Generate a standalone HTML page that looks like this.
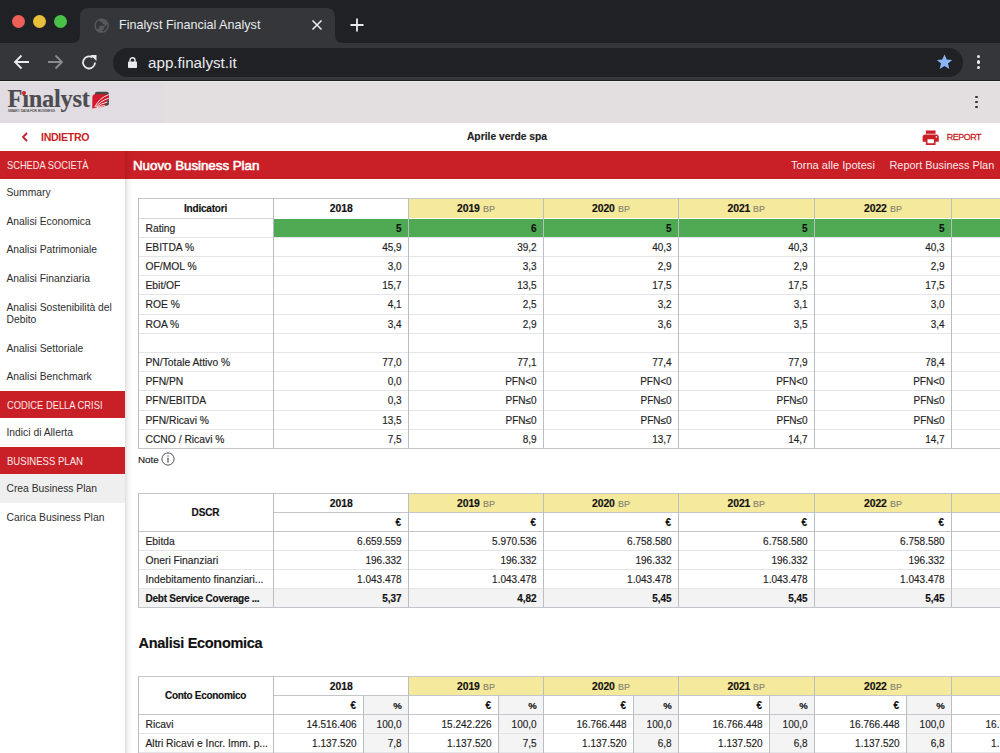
<!DOCTYPE html><html><head><meta charset='utf-8'><style>
html,body{margin:0;padding:0;width:1000px;height:753px;overflow:hidden;background:#fff;font-family:"Liberation Sans",sans-serif;}
.t{position:absolute;white-space:nowrap;-webkit-text-stroke:0.15px currentColor;}
.r{position:absolute;}
svg{position:absolute;}
</style></head><body>
<div class='r' style='left:0px;top:0px;width:1000px;height:43px;background:#202124;'></div>
<div class='r' style='left:0px;top:43px;width:1000px;height:38px;background:#35363a;'></div>
<div class='r' style='left:80px;top:8px;width:255px;height:36px;background:#35363a;border-radius:8px 8px 0 0'></div>
<svg style='left:72px;top:35px' width='8' height='8'><path d='M0 8 Q8 8 8 0 L8 8 Z' fill='#35363a'/></svg>
<svg style='left:335px;top:35px' width='8' height='8'><path d='M8 8 Q0 8 0 0 L0 8 Z' fill='#35363a'/></svg>
<div class='r' style='left:12.0px;top:15.0px;width:13px;height:13px;border-radius:50%;background:#ee5f58'></div>
<div class='r' style='left:33.0px;top:15.0px;width:13px;height:13px;border-radius:50%;background:#e8be3a'></div>
<div class='r' style='left:54.0px;top:15.0px;width:13px;height:13px;border-radius:50%;background:#4bc14a'></div>
<svg style='left:93.2px;top:16.9px' width='17.3' height='17.3' viewBox='0 0 24 24'><path transform='translate(24 0) scale(-1 1)' fill='#55585c' fill-rule='evenodd' d='M12 2C6.48 2 2 6.48 2 12s4.48 10 10 10 10-4.48 10-10S17.52 2 12 2zm-1 17.93c-3.95-.49-7-3.85-7-7.93 0-.62.08-1.21.21-1.79L9 15v1c0 1.1.9 2 2 2v1.93zm6.9-2.54c-.26-.81-1-1.39-1.9-1.39h-1v-3c0-.55-.45-1-1-1H8v-2h2c.55 0 1-.45 1-1V7h2c1.1 0 2-.9 2-2v-.41c2.93 1.19 5 4.06 5 7.41 0 2.08-.8 3.97-2.1 5.39z'/></svg>
<div class='t' style='top:18.47px;font-size:12.6px;font-weight:normal;color:#e8eaed;line-height:15.12px;left:119px;-webkit-text-stroke:0;'>Finalyst Financial Analyst</div>
<svg style='left:311px;top:19px' width='12' height='12' viewBox='0 0 12 12'><path d='M1.5 1.5 L10.5 10.5 M10.5 1.5 L1.5 10.5' stroke='#e8eaed' stroke-width='1.6'/></svg>
<svg style='left:350px;top:18px' width='14' height='14' viewBox='0 0 14 14'><path d='M7 0.5 V13.5 M0.5 7 H13.5' stroke='#e8eaed' stroke-width='1.8'/></svg>
<svg style='left:13px;top:54px' width='17' height='16' viewBox='0 0 17 16'><path d='M16 8 H2 M8.5 1.5 L2 8 L8.5 14.5' stroke='#e8eaed' stroke-width='1.8' fill='none'/></svg>
<svg style='left:47px;top:54px' width='17' height='16' viewBox='0 0 17 16'><path d='M1 8 H15 M8.5 1.5 L15 8 L8.5 14.5' stroke='#8a8b8e' stroke-width='1.8' fill='none'/></svg>
<svg style='left:81px;top:54px' width='17' height='17' viewBox='0 0 17 17'><path d='M14 8.5 A6 6 0 1 1 11.5 3.6' stroke='#e8eaed' stroke-width='1.8' fill='none'/><path d='M9.5 1 L15.5 1 L15.5 7 Z' fill='#e8eaed'/></svg>
<div class='r' style='left:112.5px;top:48px;width:850.5px;height:29px;background:#202124;border-radius:14.5px'></div>
<svg style='left:127.5px;top:56.5px' width='9' height='11' viewBox='0 0 9 11'><path d='M2 5 V3.3 A2.5 2.5 0 0 1 7 3.3 V5' stroke='#e8eaed' stroke-width='1.4' fill='none'/><rect x='0' y='4.6' width='9' height='6.4' rx='0.8' fill='#e8eaed'/></svg>
<div class='t' style='top:53.51px;font-size:15.2px;font-weight:normal;color:#e8eaed;line-height:18.24px;left:148px;-webkit-text-stroke:0;'>app.finalyst.it</div>
<svg style='left:936px;top:54px' width='17' height='16' viewBox='0 0 24 23'><path d='M12 0.8 L15.2 8 L23 8.6 L17 13.7 L18.9 21.5 L12 17.3 L5.1 21.5 L7 13.7 L1 8.6 L8.8 8 Z' fill='#8ab4f8'/></svg>
<div class='r' style='left:976.5px;top:54.900000000000006px;width:3.6px;height:3.6px;border-radius:50%;background:#e8eaed'></div>
<div class='r' style='left:976.5px;top:60.400000000000006px;width:3.6px;height:3.6px;border-radius:50%;background:#e8eaed'></div>
<div class='r' style='left:976.5px;top:65.8px;width:3.6px;height:3.6px;border-radius:50%;background:#e8eaed'></div>
<div class='r' style='left:0px;top:80px;width:1000px;height:1px;background:#1c1c1e;'></div>
<div class='r' style='left:0px;top:81px;width:1000px;height:42px;background:#e3dfe0;'></div>
<div class='r' style='left:0px;top:82px;width:164px;height:41px;background:#e1dce2;'></div>
<div class='r' style='left:0px;top:81px;width:1000px;height:1px;background:#ebe8ea;'></div>
<div class='t' style='left:7.5px;top:84.3px;font-family:"Liberation Serif",serif;font-weight:bold;font-size:24.5px;line-height:30px;color:#4d4d4f;letter-spacing:-0.3px'>F&#305;nalyst</div>
<div class='r' style='left:21.8px;top:90.8px;width:3.8px;height:3.8px;border-radius:50%;background:#d0202a'></div>
<div class='t' style='top:109.78px;font-size:3.3px;font-weight:normal;color:#555;line-height:3.96px;letter-spacing:0.05px;left:8px;'>SMART DATA FOR BUSINESS</div>
<svg style='left:85px;top:85px' width='30' height='30' viewBox='0 0 30 30'><rect x='9.8' y='6.8' width='14.1' height='13.9' rx='2.2' fill='#48484a'/><path d='M7.2 23.6 L7.4 12 Q7.6 9.2 10.4 9.2 L20.5 9.2 Q23.9 9.4 23.9 11 L23.9 13 Q21 16 20 20.5 L19 21.5 Z' fill='#d3192b'/><path d='M9.8 22 Q14 13 23.9 9.6 M10.6 22.2 Q15 16 23.9 13.2 M11.4 22.4 Q15.5 18.5 22.5 17 M12.2 22.6 Q15.5 20.8 19.8 20.6' stroke='#f4eeee' stroke-width='0.95' fill='none'/></svg>
<div class='r' style='left:975.4px;top:95.69999999999999px;width:2.8px;height:2.8px;border-radius:50%;background:#333'></div>
<div class='r' style='left:975.4px;top:100.69999999999999px;width:2.8px;height:2.8px;border-radius:50%;background:#333'></div>
<div class='r' style='left:975.4px;top:105.69999999999999px;width:2.8px;height:2.8px;border-radius:50%;background:#333'></div>
<div class='r' style='left:0px;top:123px;width:1000px;height:28px;background:#fff;'></div>
<svg style='left:21px;top:132px' width='8' height='10' viewBox='0 0 8 10'><path d='M6 1 L2 5 L6 9' stroke='#c91f26' stroke-width='1.8' fill='none'/></svg>
<div class='t' style='top:131.17px;font-size:10.6px;font-weight:bold;color:#c91f26;line-height:12.72px;letter-spacing:-0.3px;left:41px;-webkit-text-stroke:0;'>INDIETRO</div>
<div class='t' style='top:130.65px;font-size:10.3px;font-weight:bold;color:#222;line-height:12.36px;left:207px;width:600px;text-align:center;'>Aprile verde spa</div>
<svg style='left:921.2px;top:127.6px' width='19.4' height='19.4' viewBox='0 0 24 24'><path fill='#c91f26' d='M19 8H5c-1.66 0-3 1.34-3 3v6h4v4h12v-4h4v-6c0-1.66-1.34-3-3-3zm-3 11H8v-5h8v5zm3-7c-.55 0-1-.45-1-1s.45-1 1-1 1 .45 1 1-.45 1-1 1zm-1-9H6v4h12V3z'/></svg>
<div class='t' style='top:132.28px;font-size:8.9px;font-weight:normal;color:#c91f26;line-height:10.68px;letter-spacing:-0.45px;left:946.8px;-webkit-text-stroke:0.3px #c91f26;'>REPORT</div>
<div class='r' style='left:0px;top:151px;width:1000px;height:28px;background:#c91f26;'></div>
<div class='t' style='top:159.38px;font-size:10.8px;font-weight:normal;color:#fbe9ea;line-height:12.96px;transform:scaleX(0.86);transform-origin:0 0;left:6.5px;-webkit-text-stroke:0;'>SCHEDA SOCIETÀ</div>
<div class='t' style='top:157.72px;font-size:13.4px;font-weight:normal;color:#fff;line-height:16.08px;letter-spacing:-0.05px;left:133px;-webkit-text-stroke:0.55px #fff;'>Nuovo Business Plan</div>
<div class='t' style='top:159.19px;font-size:11.1px;font-weight:normal;color:#fbe9ea;line-height:13.32px;left:791px;-webkit-text-stroke:0;'>Torna alle Ipotesi</div>
<div class='t' style='top:159.38px;font-size:10.9px;font-weight:normal;color:#fbe9ea;line-height:13.08px;left:889.5px;-webkit-text-stroke:0;'>Report Business Plan</div>
<div class='r' style='left:0px;top:179px;width:125px;height:574px;background:#fff;'></div>
<div class='t' style='top:187.25px;font-size:10.3px;font-weight:normal;color:#2e2e2e;line-height:12.36px;left:6.5px;-webkit-text-stroke:0;'>Summary</div>
<div class='t' style='top:215.95px;font-size:10.3px;font-weight:normal;color:#2e2e2e;line-height:12.36px;left:6.5px;-webkit-text-stroke:0;'>Analisi Economica</div>
<div class='t' style='top:244.45px;font-size:10.3px;font-weight:normal;color:#2e2e2e;line-height:12.36px;left:6.5px;-webkit-text-stroke:0;'>Analisi Patrimoniale</div>
<div class='t' style='top:272.95px;font-size:10.3px;font-weight:normal;color:#2e2e2e;line-height:12.36px;left:6.5px;-webkit-text-stroke:0;'>Analisi Finanziaria</div>
<div class='t' style='top:301.95px;font-size:10.3px;font-weight:normal;color:#2e2e2e;line-height:12.36px;left:6.5px;-webkit-text-stroke:0;'>Analisi Sostenibilità del</div>
<div class='t' style='top:314.45px;font-size:10.3px;font-weight:normal;color:#2e2e2e;line-height:12.36px;left:6.5px;-webkit-text-stroke:0;'>Debito</div>
<div class='t' style='top:342.95px;font-size:10.3px;font-weight:normal;color:#2e2e2e;line-height:12.36px;left:6.5px;-webkit-text-stroke:0;'>Analisi Settoriale</div>
<div class='t' style='top:371.45px;font-size:10.3px;font-weight:normal;color:#2e2e2e;line-height:12.36px;left:6.5px;-webkit-text-stroke:0;'>Analisi Benchmark</div>
<div class='r' style='left:0px;top:391px;width:125px;height:27px;background:#c91f26;'></div>
<div class='t' style='top:398.88px;font-size:10.8px;font-weight:normal;color:#fbe9ea;line-height:12.96px;transform:scaleX(0.865);transform-origin:0 0;left:6.5px;-webkit-text-stroke:0;'>CODICE DELLA CRISI</div>
<div class='t' style='top:427.45px;font-size:10.3px;font-weight:normal;color:#2e2e2e;line-height:12.36px;left:6.5px;-webkit-text-stroke:0;'>Indici di Allerta</div>
<div class='r' style='left:0px;top:447px;width:125px;height:27px;background:#c91f26;'></div>
<div class='t' style='top:454.88px;font-size:10.8px;font-weight:normal;color:#fbe9ea;line-height:12.96px;transform:scaleX(0.885);transform-origin:0 0;left:6.5px;-webkit-text-stroke:0;'>BUSINESS PLAN</div>
<div class='r' style='left:0px;top:474px;width:125px;height:29px;background:#efefef;'></div>
<div class='t' style='top:483.45px;font-size:10.3px;font-weight:normal;color:#2e2e2e;line-height:12.36px;left:6.5px;-webkit-text-stroke:0;'>Crea Business Plan</div>
<div class='t' style='top:511.95px;font-size:10.3px;font-weight:normal;color:#2e2e2e;line-height:12.36px;left:6.5px;-webkit-text-stroke:0;'>Carica Business Plan</div>
<div class='r' style='left:408px;top:198px;width:135px;height:20px;background:#f5e99b;'></div>
<div class='r' style='left:543px;top:198px;width:135px;height:20px;background:#f5e99b;'></div>
<div class='r' style='left:678px;top:198px;width:136px;height:20px;background:#f5e99b;'></div>
<div class='r' style='left:814px;top:198px;width:137px;height:20px;background:#f5e99b;'></div>
<div class='r' style='left:951px;top:198px;width:136px;height:20px;background:#f5e99b;'></div>
<div class='r' style='left:273px;top:219px;width:727px;height:18px;background:#4ea952;'></div>
<div class='r' style='left:138px;top:237px;width:862px;height:1px;background:#e3e5e8'></div>
<div class='r' style='left:138px;top:256px;width:862px;height:1px;background:#e3e5e8'></div>
<div class='r' style='left:138px;top:275px;width:862px;height:1px;background:#e3e5e8'></div>
<div class='r' style='left:138px;top:294px;width:862px;height:1px;background:#e3e5e8'></div>
<div class='r' style='left:138px;top:314px;width:862px;height:1px;background:#e3e5e8'></div>
<div class='r' style='left:138px;top:333px;width:862px;height:1px;background:#e3e5e8'></div>
<div class='r' style='left:138px;top:352px;width:862px;height:1px;background:#e3e5e8'></div>
<div class='r' style='left:138px;top:371px;width:862px;height:1px;background:#e3e5e8'></div>
<div class='r' style='left:138px;top:390px;width:862px;height:1px;background:#e3e5e8'></div>
<div class='r' style='left:138px;top:410px;width:862px;height:1px;background:#e3e5e8'></div>
<div class='r' style='left:138px;top:429px;width:862px;height:1px;background:#e3e5e8'></div>
<div class='r' style='left:138px;top:218px;width:135px;height:1px;background:#d3d6da'></div>
<div class='r' style='left:138px;top:198px;width:862px;height:1.3px;background:#c3c7cc'></div>
<div class='r' style='left:138px;top:448px;width:862px;height:1.3px;background:#c3c7cc'></div>
<div class='r' style='left:138px;top:198px;width:1px;height:250px;background:#b9bec6'></div>
<div class='r' style='left:273px;top:198px;width:1px;height:250px;background:#b9bec6'></div>
<div class='r' style='left:408px;top:198px;width:1px;height:250px;background:#b9bec6'></div>
<div class='r' style='left:543px;top:198px;width:1px;height:250px;background:#b9bec6'></div>
<div class='r' style='left:678px;top:198px;width:1px;height:250px;background:#b9bec6'></div>
<div class='r' style='left:814px;top:198px;width:1px;height:250px;background:#b9bec6'></div>
<div class='r' style='left:951px;top:198px;width:1px;height:250px;background:#b9bec6'></div>
<div class='t' style='top:203.44px;font-size:10px;font-weight:bold;color:#111;line-height:12.0px;letter-spacing:-0.2px;left:-94.5px;width:600px;text-align:center;'>Indicatori</div>
<div class='t' style='top:203.06px;font-size:10.4px;font-weight:bold;color:#111;line-height:12.48px;letter-spacing:-0.05px;left:41.19999999999999px;width:600px;text-align:center;'>2018</div>
<div class='t' style='left:176.2px;width:600px;text-align:center;top:203.15px;font-size:10px;line-height:12px;color:#111'><b style='font-size:10.4px;letter-spacing:-0.05px'>2019</b> <span style='color:#858272;font-size:9.6px;display:inline-block;transform:scaleX(0.93);transform-origin:0 0'>BP</span></div>
<div class='t' style='left:311.20000000000005px;width:600px;text-align:center;top:203.15px;font-size:10px;line-height:12px;color:#111'><b style='font-size:10.4px;letter-spacing:-0.05px'>2020</b> <span style='color:#858272;font-size:9.6px;display:inline-block;transform:scaleX(0.93);transform-origin:0 0'>BP</span></div>
<div class='t' style='left:446.70000000000005px;width:600px;text-align:center;top:203.15px;font-size:10px;line-height:12px;color:#111'><b style='font-size:10.4px;letter-spacing:-0.05px'>2021</b> <span style='color:#858272;font-size:9.6px;display:inline-block;transform:scaleX(0.93);transform-origin:0 0'>BP</span></div>
<div class='t' style='left:583.2px;width:600px;text-align:center;top:203.15px;font-size:10px;line-height:12px;color:#111'><b style='font-size:10.4px;letter-spacing:-0.05px'>2022</b> <span style='color:#858272;font-size:9.6px;display:inline-block;transform:scaleX(0.93);transform-origin:0 0'>BP</span></div>
<div class='t' style='top:223.05px;font-size:10.3px;font-weight:normal;color:#1e1e1e;line-height:12.36px;left:145.5px;'>Rating</div>
<div class='t' style='top:223.34px;font-size:10px;font-weight:bold;color:#111;line-height:12.0px;right:598.4px;'>5</div>
<div class='t' style='top:223.34px;font-size:10px;font-weight:bold;color:#111;line-height:12.0px;right:463.4px;'>6</div>
<div class='t' style='top:223.34px;font-size:10px;font-weight:bold;color:#111;line-height:12.0px;right:328.4px;'>5</div>
<div class='t' style='top:223.34px;font-size:10px;font-weight:bold;color:#111;line-height:12.0px;right:192.39999999999998px;'>5</div>
<div class='t' style='top:223.34px;font-size:10px;font-weight:bold;color:#111;line-height:12.0px;right:55.39999999999998px;'>5</div>
<div class='t' style='top:242.05px;font-size:10.3px;font-weight:normal;color:#1e1e1e;line-height:12.36px;left:145.5px;'>EBITDA %</div>
<div class='t' style='top:242.34px;font-size:10px;font-weight:normal;color:#1e1e1e;line-height:12.0px;right:598.4px;'>45,9</div>
<div class='t' style='top:242.34px;font-size:10px;font-weight:normal;color:#1e1e1e;line-height:12.0px;right:463.4px;'>39,2</div>
<div class='t' style='top:242.34px;font-size:10px;font-weight:normal;color:#1e1e1e;line-height:12.0px;right:328.4px;'>40,3</div>
<div class='t' style='top:242.34px;font-size:10px;font-weight:normal;color:#1e1e1e;line-height:12.0px;right:192.39999999999998px;'>40,3</div>
<div class='t' style='top:242.34px;font-size:10px;font-weight:normal;color:#1e1e1e;line-height:12.0px;right:55.39999999999998px;'>40,3</div>
<div class='t' style='top:261.05px;font-size:10.3px;font-weight:normal;color:#1e1e1e;line-height:12.36px;left:145.5px;'>OF/MOL %</div>
<div class='t' style='top:261.33px;font-size:10px;font-weight:normal;color:#1e1e1e;line-height:12.0px;right:598.4px;'>3,0</div>
<div class='t' style='top:261.33px;font-size:10px;font-weight:normal;color:#1e1e1e;line-height:12.0px;right:463.4px;'>3,3</div>
<div class='t' style='top:261.33px;font-size:10px;font-weight:normal;color:#1e1e1e;line-height:12.0px;right:328.4px;'>2,9</div>
<div class='t' style='top:261.33px;font-size:10px;font-weight:normal;color:#1e1e1e;line-height:12.0px;right:192.39999999999998px;'>2,9</div>
<div class='t' style='top:261.33px;font-size:10px;font-weight:normal;color:#1e1e1e;line-height:12.0px;right:55.39999999999998px;'>2,9</div>
<div class='t' style='top:280.05px;font-size:10.3px;font-weight:normal;color:#1e1e1e;line-height:12.36px;left:145.5px;'>Ebit/OF</div>
<div class='t' style='top:280.33px;font-size:10px;font-weight:normal;color:#1e1e1e;line-height:12.0px;right:598.4px;'>15,7</div>
<div class='t' style='top:280.33px;font-size:10px;font-weight:normal;color:#1e1e1e;line-height:12.0px;right:463.4px;'>13,5</div>
<div class='t' style='top:280.33px;font-size:10px;font-weight:normal;color:#1e1e1e;line-height:12.0px;right:328.4px;'>17,5</div>
<div class='t' style='top:280.33px;font-size:10px;font-weight:normal;color:#1e1e1e;line-height:12.0px;right:192.39999999999998px;'>17,5</div>
<div class='t' style='top:280.33px;font-size:10px;font-weight:normal;color:#1e1e1e;line-height:12.0px;right:55.39999999999998px;'>17,5</div>
<div class='t' style='top:299.05px;font-size:10.3px;font-weight:normal;color:#1e1e1e;line-height:12.36px;left:145.5px;'>ROE %</div>
<div class='t' style='top:299.33px;font-size:10px;font-weight:normal;color:#1e1e1e;line-height:12.0px;right:598.4px;'>4,1</div>
<div class='t' style='top:299.33px;font-size:10px;font-weight:normal;color:#1e1e1e;line-height:12.0px;right:463.4px;'>2,5</div>
<div class='t' style='top:299.33px;font-size:10px;font-weight:normal;color:#1e1e1e;line-height:12.0px;right:328.4px;'>3,2</div>
<div class='t' style='top:299.33px;font-size:10px;font-weight:normal;color:#1e1e1e;line-height:12.0px;right:192.39999999999998px;'>3,1</div>
<div class='t' style='top:299.33px;font-size:10px;font-weight:normal;color:#1e1e1e;line-height:12.0px;right:55.39999999999998px;'>3,0</div>
<div class='t' style='top:319.05px;font-size:10.3px;font-weight:normal;color:#1e1e1e;line-height:12.36px;left:145.5px;'>ROA %</div>
<div class='t' style='top:319.33px;font-size:10px;font-weight:normal;color:#1e1e1e;line-height:12.0px;right:598.4px;'>3,4</div>
<div class='t' style='top:319.33px;font-size:10px;font-weight:normal;color:#1e1e1e;line-height:12.0px;right:463.4px;'>2,9</div>
<div class='t' style='top:319.33px;font-size:10px;font-weight:normal;color:#1e1e1e;line-height:12.0px;right:328.4px;'>3,6</div>
<div class='t' style='top:319.33px;font-size:10px;font-weight:normal;color:#1e1e1e;line-height:12.0px;right:192.39999999999998px;'>3,5</div>
<div class='t' style='top:319.33px;font-size:10px;font-weight:normal;color:#1e1e1e;line-height:12.0px;right:55.39999999999998px;'>3,4</div>
<div class='t' style='top:357.05px;font-size:10.3px;font-weight:normal;color:#1e1e1e;line-height:12.36px;left:145.5px;'>PN/Totale Attivo %</div>
<div class='t' style='top:357.33px;font-size:10px;font-weight:normal;color:#1e1e1e;line-height:12.0px;right:598.4px;'>77,0</div>
<div class='t' style='top:357.33px;font-size:10px;font-weight:normal;color:#1e1e1e;line-height:12.0px;right:463.4px;'>77,1</div>
<div class='t' style='top:357.33px;font-size:10px;font-weight:normal;color:#1e1e1e;line-height:12.0px;right:328.4px;'>77,4</div>
<div class='t' style='top:357.33px;font-size:10px;font-weight:normal;color:#1e1e1e;line-height:12.0px;right:192.39999999999998px;'>77,9</div>
<div class='t' style='top:357.33px;font-size:10px;font-weight:normal;color:#1e1e1e;line-height:12.0px;right:55.39999999999998px;'>78,4</div>
<div class='t' style='top:376.05px;font-size:10.3px;font-weight:normal;color:#1e1e1e;line-height:12.36px;left:145.5px;'>PFN/PN</div>
<div class='t' style='top:376.33px;font-size:10px;font-weight:normal;color:#1e1e1e;line-height:12.0px;right:598.4px;'>0,0</div>
<div class='t' style='top:376.33px;font-size:10px;font-weight:normal;color:#1e1e1e;line-height:12.0px;right:463.4px;'>PFN&lt;0</div>
<div class='t' style='top:376.33px;font-size:10px;font-weight:normal;color:#1e1e1e;line-height:12.0px;right:328.4px;'>PFN&lt;0</div>
<div class='t' style='top:376.33px;font-size:10px;font-weight:normal;color:#1e1e1e;line-height:12.0px;right:192.39999999999998px;'>PFN&lt;0</div>
<div class='t' style='top:376.33px;font-size:10px;font-weight:normal;color:#1e1e1e;line-height:12.0px;right:55.39999999999998px;'>PFN&lt;0</div>
<div class='t' style='top:395.05px;font-size:10.3px;font-weight:normal;color:#1e1e1e;line-height:12.36px;left:145.5px;'>PFN/EBITDA</div>
<div class='t' style='top:395.33px;font-size:10px;font-weight:normal;color:#1e1e1e;line-height:12.0px;right:598.4px;'>0,3</div>
<div class='t' style='top:395.33px;font-size:10px;font-weight:normal;color:#1e1e1e;line-height:12.0px;right:463.4px;'>PFN≤0</div>
<div class='t' style='top:395.33px;font-size:10px;font-weight:normal;color:#1e1e1e;line-height:12.0px;right:328.4px;'>PFN≤0</div>
<div class='t' style='top:395.33px;font-size:10px;font-weight:normal;color:#1e1e1e;line-height:12.0px;right:192.39999999999998px;'>PFN≤0</div>
<div class='t' style='top:395.33px;font-size:10px;font-weight:normal;color:#1e1e1e;line-height:12.0px;right:55.39999999999998px;'>PFN≤0</div>
<div class='t' style='top:415.05px;font-size:10.3px;font-weight:normal;color:#1e1e1e;line-height:12.36px;left:145.5px;'>PFN/Ricavi %</div>
<div class='t' style='top:415.33px;font-size:10px;font-weight:normal;color:#1e1e1e;line-height:12.0px;right:598.4px;'>13,5</div>
<div class='t' style='top:415.33px;font-size:10px;font-weight:normal;color:#1e1e1e;line-height:12.0px;right:463.4px;'>PFN≤0</div>
<div class='t' style='top:415.33px;font-size:10px;font-weight:normal;color:#1e1e1e;line-height:12.0px;right:328.4px;'>PFN≤0</div>
<div class='t' style='top:415.33px;font-size:10px;font-weight:normal;color:#1e1e1e;line-height:12.0px;right:192.39999999999998px;'>PFN≤0</div>
<div class='t' style='top:415.33px;font-size:10px;font-weight:normal;color:#1e1e1e;line-height:12.0px;right:55.39999999999998px;'>PFN≤0</div>
<div class='t' style='top:434.05px;font-size:10.3px;font-weight:normal;color:#1e1e1e;line-height:12.36px;left:145.5px;'>CCNO / Ricavi %</div>
<div class='t' style='top:434.33px;font-size:10px;font-weight:normal;color:#1e1e1e;line-height:12.0px;right:598.4px;'>7,5</div>
<div class='t' style='top:434.33px;font-size:10px;font-weight:normal;color:#1e1e1e;line-height:12.0px;right:463.4px;'>8,9</div>
<div class='t' style='top:434.33px;font-size:10px;font-weight:normal;color:#1e1e1e;line-height:12.0px;right:328.4px;'>13,7</div>
<div class='t' style='top:434.33px;font-size:10px;font-weight:normal;color:#1e1e1e;line-height:12.0px;right:192.39999999999998px;'>14,7</div>
<div class='t' style='top:434.33px;font-size:10px;font-weight:normal;color:#1e1e1e;line-height:12.0px;right:55.39999999999998px;'>14,7</div>
<div class='t' style='top:454.12px;font-size:9.8px;font-weight:normal;color:#222;line-height:11.76px;left:138px;'>Note</div>
<svg style='left:160.5px;top:451.6px' width='14' height='14' viewBox='0 0 14 14'><circle cx='7' cy='7' r='6.1' stroke='#444' stroke-width='0.9' fill='none'/><rect x='6.45' y='5.6' width='1.1' height='5' fill='#444'/><circle cx='7' cy='3.9' r='0.7' fill='#444'/></svg>
<div class='r' style='left:408px;top:493px;width:135px;height:19px;background:#f5e99b;'></div>
<div class='r' style='left:543px;top:493px;width:135px;height:19px;background:#f5e99b;'></div>
<div class='r' style='left:678px;top:493px;width:136px;height:19px;background:#f5e99b;'></div>
<div class='r' style='left:814px;top:493px;width:137px;height:19px;background:#f5e99b;'></div>
<div class='r' style='left:951px;top:493px;width:136px;height:19px;background:#f5e99b;'></div>
<div class='r' style='left:138px;top:588px;width:862px;height:19px;background:#f3f3f4;'></div>
<div class='r' style='left:138px;top:550px;width:862px;height:1px;background:#e3e5e8'></div>
<div class='r' style='left:138px;top:569px;width:862px;height:1px;background:#e3e5e8'></div>
<div class='r' style='left:138px;top:588px;width:862px;height:1px;background:#e3e5e8'></div>
<div class='r' style='left:273px;top:512px;width:727px;height:1px;background:#c3c7cc'></div>
<div class='r' style='left:138px;top:531px;width:862px;height:1px;background:#c3c7cc'></div>
<div class='r' style='left:138px;top:493px;width:862px;height:1.3px;background:#c3c7cc'></div>
<div class='r' style='left:138px;top:607px;width:862px;height:1.3px;background:#c3c7cc'></div>
<div class='r' style='left:138px;top:493px;width:1px;height:114px;background:#b9bec6'></div>
<div class='r' style='left:273px;top:493px;width:1px;height:114px;background:#b9bec6'></div>
<div class='r' style='left:408px;top:493px;width:1px;height:114px;background:#b9bec6'></div>
<div class='r' style='left:543px;top:493px;width:1px;height:114px;background:#b9bec6'></div>
<div class='r' style='left:678px;top:493px;width:1px;height:114px;background:#b9bec6'></div>
<div class='r' style='left:814px;top:493px;width:1px;height:114px;background:#b9bec6'></div>
<div class='r' style='left:951px;top:493px;width:1px;height:114px;background:#b9bec6'></div>
<div class='t' style='top:507.44px;font-size:10px;font-weight:bold;color:#111;line-height:12.0px;letter-spacing:-0.1px;left:-94.5px;width:600px;text-align:center;'>DSCR</div>
<div class='t' style='top:497.56px;font-size:10.4px;font-weight:bold;color:#111;line-height:12.48px;letter-spacing:-0.05px;left:41.19999999999999px;width:600px;text-align:center;'>2018</div>
<div class='t' style='left:176.2px;width:600px;text-align:center;top:497.65px;font-size:10px;line-height:12px;color:#111'><b style='font-size:10.4px;letter-spacing:-0.05px'>2019</b> <span style='color:#858272;font-size:9.6px;display:inline-block;transform:scaleX(0.93);transform-origin:0 0'>BP</span></div>
<div class='t' style='left:311.20000000000005px;width:600px;text-align:center;top:497.65px;font-size:10px;line-height:12px;color:#111'><b style='font-size:10.4px;letter-spacing:-0.05px'>2020</b> <span style='color:#858272;font-size:9.6px;display:inline-block;transform:scaleX(0.93);transform-origin:0 0'>BP</span></div>
<div class='t' style='left:446.70000000000005px;width:600px;text-align:center;top:497.65px;font-size:10px;line-height:12px;color:#111'><b style='font-size:10.4px;letter-spacing:-0.05px'>2021</b> <span style='color:#858272;font-size:9.6px;display:inline-block;transform:scaleX(0.93);transform-origin:0 0'>BP</span></div>
<div class='t' style='left:583.2px;width:600px;text-align:center;top:497.65px;font-size:10px;line-height:12px;color:#111'><b style='font-size:10.4px;letter-spacing:-0.05px'>2022</b> <span style='color:#858272;font-size:9.6px;display:inline-block;transform:scaleX(0.93);transform-origin:0 0'>BP</span></div>
<div class='t' style='top:516.94px;font-size:10px;font-weight:bold;color:#111;line-height:12.0px;right:599px;'>€</div>
<div class='t' style='top:516.94px;font-size:10px;font-weight:bold;color:#111;line-height:12.0px;right:464px;'>€</div>
<div class='t' style='top:516.94px;font-size:10px;font-weight:bold;color:#111;line-height:12.0px;right:329px;'>€</div>
<div class='t' style='top:516.94px;font-size:10px;font-weight:bold;color:#111;line-height:12.0px;right:193px;'>€</div>
<div class='t' style='top:516.94px;font-size:10px;font-weight:bold;color:#111;line-height:12.0px;right:56px;'>€</div>
<div class='t' style='top:536.05px;font-size:10.3px;font-weight:normal;color:#1e1e1e;line-height:12.36px;left:145.5px;'>Ebitda</div>
<div class='t' style='top:536.34px;font-size:10px;font-weight:normal;color:#1e1e1e;line-height:12.0px;right:598.4px;'>6.659.559</div>
<div class='t' style='top:536.34px;font-size:10px;font-weight:normal;color:#1e1e1e;line-height:12.0px;right:463.4px;'>5.970.536</div>
<div class='t' style='top:536.34px;font-size:10px;font-weight:normal;color:#1e1e1e;line-height:12.0px;right:328.4px;'>6.758.580</div>
<div class='t' style='top:536.34px;font-size:10px;font-weight:normal;color:#1e1e1e;line-height:12.0px;right:192.39999999999998px;'>6.758.580</div>
<div class='t' style='top:536.34px;font-size:10px;font-weight:normal;color:#1e1e1e;line-height:12.0px;right:55.39999999999998px;'>6.758.580</div>
<div class='t' style='top:555.05px;font-size:10.3px;font-weight:normal;color:#1e1e1e;line-height:12.36px;left:145.5px;'>Oneri Finanziari</div>
<div class='t' style='top:555.34px;font-size:10px;font-weight:normal;color:#1e1e1e;line-height:12.0px;right:598.4px;'>196.332</div>
<div class='t' style='top:555.34px;font-size:10px;font-weight:normal;color:#1e1e1e;line-height:12.0px;right:463.4px;'>196.332</div>
<div class='t' style='top:555.34px;font-size:10px;font-weight:normal;color:#1e1e1e;line-height:12.0px;right:328.4px;'>196.332</div>
<div class='t' style='top:555.34px;font-size:10px;font-weight:normal;color:#1e1e1e;line-height:12.0px;right:192.39999999999998px;'>196.332</div>
<div class='t' style='top:555.34px;font-size:10px;font-weight:normal;color:#1e1e1e;line-height:12.0px;right:55.39999999999998px;'>196.332</div>
<div class='t' style='top:574.05px;font-size:10.3px;font-weight:normal;color:#1e1e1e;line-height:12.36px;left:145.5px;'>Indebitamento finanziari...</div>
<div class='t' style='top:574.34px;font-size:10px;font-weight:normal;color:#1e1e1e;line-height:12.0px;right:598.4px;'>1.043.478</div>
<div class='t' style='top:574.34px;font-size:10px;font-weight:normal;color:#1e1e1e;line-height:12.0px;right:463.4px;'>1.043.478</div>
<div class='t' style='top:574.34px;font-size:10px;font-weight:normal;color:#1e1e1e;line-height:12.0px;right:328.4px;'>1.043.478</div>
<div class='t' style='top:574.34px;font-size:10px;font-weight:normal;color:#1e1e1e;line-height:12.0px;right:192.39999999999998px;'>1.043.478</div>
<div class='t' style='top:574.34px;font-size:10px;font-weight:normal;color:#1e1e1e;line-height:12.0px;right:55.39999999999998px;'>1.043.478</div>
<div class='t' style='top:593.34px;font-size:10px;font-weight:bold;color:#111;line-height:12.0px;letter-spacing:-0.25px;left:145.5px;'>Debt Service Coverage ...</div>
<div class='t' style='top:593.34px;font-size:10px;font-weight:bold;color:#111;line-height:12.0px;right:598.4px;'>5,37</div>
<div class='t' style='top:593.34px;font-size:10px;font-weight:bold;color:#111;line-height:12.0px;right:463.4px;'>4,82</div>
<div class='t' style='top:593.34px;font-size:10px;font-weight:bold;color:#111;line-height:12.0px;right:328.4px;'>5,45</div>
<div class='t' style='top:593.34px;font-size:10px;font-weight:bold;color:#111;line-height:12.0px;right:192.39999999999998px;'>5,45</div>
<div class='t' style='top:593.34px;font-size:10px;font-weight:bold;color:#111;line-height:12.0px;right:55.39999999999998px;'>5,45</div>
<div class='t' style='top:634.58px;font-size:14.5px;font-weight:bold;color:#111;line-height:17.4px;letter-spacing:-0.3px;left:138.5px;'>Analisi Economica</div>
<div class='r' style='left:408px;top:676px;width:135px;height:19px;background:#f5e99b;'></div>
<div class='r' style='left:543px;top:676px;width:135px;height:19px;background:#f5e99b;'></div>
<div class='r' style='left:678px;top:676px;width:136px;height:19px;background:#f5e99b;'></div>
<div class='r' style='left:814px;top:676px;width:137px;height:19px;background:#f5e99b;'></div>
<div class='r' style='left:951px;top:676px;width:136px;height:19px;background:#f5e99b;'></div>
<div class='r' style='left:363px;top:695px;width:45px;height:58px;background:#f4f4f5;'></div>
<div class='r' style='left:498px;top:695px;width:45px;height:58px;background:#f4f4f5;'></div>
<div class='r' style='left:633px;top:695px;width:45px;height:58px;background:#f4f4f5;'></div>
<div class='r' style='left:769px;top:695px;width:45px;height:58px;background:#f4f4f5;'></div>
<div class='r' style='left:906px;top:695px;width:45px;height:58px;background:#f4f4f5;'></div>
<div class='r' style='left:1042px;top:695px;width:45px;height:58px;background:#f4f4f5;'></div>
<div class='r' style='left:138px;top:733px;width:862px;height:1px;background:#e3e5e8'></div>
<div class='r' style='left:138px;top:752px;width:862px;height:1px;background:#e3e5e8'></div>
<div class='r' style='left:273px;top:695px;width:727px;height:1px;background:#c3c7cc'></div>
<div class='r' style='left:138px;top:714px;width:862px;height:1px;background:#c3c7cc'></div>
<div class='r' style='left:138px;top:676px;width:862px;height:1.3px;background:#c3c7cc'></div>
<div class='r' style='left:138px;top:676px;width:1px;height:77px;background:#b9bec6'></div>
<div class='r' style='left:273px;top:676px;width:1px;height:77px;background:#b9bec6'></div>
<div class='r' style='left:408px;top:676px;width:1px;height:77px;background:#b9bec6'></div>
<div class='r' style='left:543px;top:676px;width:1px;height:77px;background:#b9bec6'></div>
<div class='r' style='left:678px;top:676px;width:1px;height:77px;background:#b9bec6'></div>
<div class='r' style='left:814px;top:676px;width:1px;height:77px;background:#b9bec6'></div>
<div class='r' style='left:951px;top:676px;width:1px;height:77px;background:#b9bec6'></div>
<div class='r' style='left:363px;top:695px;width:1px;height:58px;background:#b9bec6'></div>
<div class='r' style='left:498px;top:695px;width:1px;height:58px;background:#b9bec6'></div>
<div class='r' style='left:633px;top:695px;width:1px;height:58px;background:#b9bec6'></div>
<div class='r' style='left:769px;top:695px;width:1px;height:58px;background:#b9bec6'></div>
<div class='r' style='left:906px;top:695px;width:1px;height:58px;background:#b9bec6'></div>
<div class='r' style='left:1042px;top:695px;width:1px;height:58px;background:#b9bec6'></div>
<div class='t' style='top:690.44px;font-size:10px;font-weight:bold;color:#111;line-height:12.0px;letter-spacing:-0.3px;left:-94.5px;width:600px;text-align:center;'>Conto Economico</div>
<div class='t' style='top:680.56px;font-size:10.4px;font-weight:bold;color:#111;line-height:12.48px;letter-spacing:-0.05px;left:41.19999999999999px;width:600px;text-align:center;'>2018</div>
<div class='t' style='left:176.2px;width:600px;text-align:center;top:680.65px;font-size:10px;line-height:12px;color:#111'><b style='font-size:10.4px;letter-spacing:-0.05px'>2019</b> <span style='color:#858272;font-size:9.6px;display:inline-block;transform:scaleX(0.93);transform-origin:0 0'>BP</span></div>
<div class='t' style='left:311.20000000000005px;width:600px;text-align:center;top:680.65px;font-size:10px;line-height:12px;color:#111'><b style='font-size:10.4px;letter-spacing:-0.05px'>2020</b> <span style='color:#858272;font-size:9.6px;display:inline-block;transform:scaleX(0.93);transform-origin:0 0'>BP</span></div>
<div class='t' style='left:446.70000000000005px;width:600px;text-align:center;top:680.65px;font-size:10px;line-height:12px;color:#111'><b style='font-size:10.4px;letter-spacing:-0.05px'>2021</b> <span style='color:#858272;font-size:9.6px;display:inline-block;transform:scaleX(0.93);transform-origin:0 0'>BP</span></div>
<div class='t' style='left:583.2px;width:600px;text-align:center;top:680.65px;font-size:10px;line-height:12px;color:#111'><b style='font-size:10.4px;letter-spacing:-0.05px'>2022</b> <span style='color:#858272;font-size:9.6px;display:inline-block;transform:scaleX(0.93);transform-origin:0 0'>BP</span></div>
<div class='t' style='top:699.94px;font-size:10px;font-weight:bold;color:#111;line-height:12.0px;right:644px;'>€</div>
<div class='t' style='top:700.31px;font-size:9.6px;font-weight:bold;color:#111;line-height:11.52px;letter-spacing:-0.3px;right:598.6px;'>%</div>
<div class='t' style='top:699.94px;font-size:10px;font-weight:bold;color:#111;line-height:12.0px;right:509px;'>€</div>
<div class='t' style='top:700.31px;font-size:9.6px;font-weight:bold;color:#111;line-height:11.52px;letter-spacing:-0.3px;right:463.6px;'>%</div>
<div class='t' style='top:699.94px;font-size:10px;font-weight:bold;color:#111;line-height:12.0px;right:374px;'>€</div>
<div class='t' style='top:700.31px;font-size:9.6px;font-weight:bold;color:#111;line-height:11.52px;letter-spacing:-0.3px;right:328.6px;'>%</div>
<div class='t' style='top:699.94px;font-size:10px;font-weight:bold;color:#111;line-height:12.0px;right:238px;'>€</div>
<div class='t' style='top:700.31px;font-size:9.6px;font-weight:bold;color:#111;line-height:11.52px;letter-spacing:-0.3px;right:192.60000000000002px;'>%</div>
<div class='t' style='top:699.94px;font-size:10px;font-weight:bold;color:#111;line-height:12.0px;right:101px;'>€</div>
<div class='t' style='top:700.31px;font-size:9.6px;font-weight:bold;color:#111;line-height:11.52px;letter-spacing:-0.3px;right:55.60000000000002px;'>%</div>
<div class='t' style='top:719.05px;font-size:10.3px;font-weight:normal;color:#1e1e1e;line-height:12.36px;left:145.5px;'>Ricavi</div>
<div class='t' style='top:719.34px;font-size:10px;font-weight:normal;color:#1e1e1e;line-height:12.0px;right:643.4px;'>14.516.406</div>
<div class='t' style='top:719.34px;font-size:10px;font-weight:normal;color:#1e1e1e;line-height:12.0px;right:598.4px;'>100,0</div>
<div class='t' style='top:719.34px;font-size:10px;font-weight:normal;color:#1e1e1e;line-height:12.0px;right:508.4px;'>15.242.226</div>
<div class='t' style='top:719.34px;font-size:10px;font-weight:normal;color:#1e1e1e;line-height:12.0px;right:463.4px;'>100,0</div>
<div class='t' style='top:719.34px;font-size:10px;font-weight:normal;color:#1e1e1e;line-height:12.0px;right:373.4px;'>16.766.448</div>
<div class='t' style='top:719.34px;font-size:10px;font-weight:normal;color:#1e1e1e;line-height:12.0px;right:328.4px;'>100,0</div>
<div class='t' style='top:719.34px;font-size:10px;font-weight:normal;color:#1e1e1e;line-height:12.0px;right:237.39999999999998px;'>16.766.448</div>
<div class='t' style='top:719.34px;font-size:10px;font-weight:normal;color:#1e1e1e;line-height:12.0px;right:192.39999999999998px;'>100,0</div>
<div class='t' style='top:719.34px;font-size:10px;font-weight:normal;color:#1e1e1e;line-height:12.0px;right:100.39999999999998px;'>16.766.448</div>
<div class='t' style='top:719.34px;font-size:10px;font-weight:normal;color:#1e1e1e;line-height:12.0px;right:55.39999999999998px;'>100,0</div>
<div class='t' style='top:719.34px;font-size:10px;font-weight:normal;color:#1e1e1e;line-height:12.0px;right:-35.59999999999991px;'>16.766.448</div>
<div class='t' style='top:738.05px;font-size:10.3px;font-weight:normal;color:#1e1e1e;line-height:12.36px;left:145.5px;'>Altri Ricavi e Incr. Imm. p...</div>
<div class='t' style='top:738.34px;font-size:10px;font-weight:normal;color:#1e1e1e;line-height:12.0px;right:643.4px;'>1.137.520</div>
<div class='t' style='top:738.34px;font-size:10px;font-weight:normal;color:#1e1e1e;line-height:12.0px;right:598.4px;'>7,8</div>
<div class='t' style='top:738.34px;font-size:10px;font-weight:normal;color:#1e1e1e;line-height:12.0px;right:508.4px;'>1.137.520</div>
<div class='t' style='top:738.34px;font-size:10px;font-weight:normal;color:#1e1e1e;line-height:12.0px;right:463.4px;'>7,5</div>
<div class='t' style='top:738.34px;font-size:10px;font-weight:normal;color:#1e1e1e;line-height:12.0px;right:373.4px;'>1.137.520</div>
<div class='t' style='top:738.34px;font-size:10px;font-weight:normal;color:#1e1e1e;line-height:12.0px;right:328.4px;'>6,8</div>
<div class='t' style='top:738.34px;font-size:10px;font-weight:normal;color:#1e1e1e;line-height:12.0px;right:237.39999999999998px;'>1.137.520</div>
<div class='t' style='top:738.34px;font-size:10px;font-weight:normal;color:#1e1e1e;line-height:12.0px;right:192.39999999999998px;'>6,8</div>
<div class='t' style='top:738.34px;font-size:10px;font-weight:normal;color:#1e1e1e;line-height:12.0px;right:100.39999999999998px;'>1.137.520</div>
<div class='t' style='top:738.34px;font-size:10px;font-weight:normal;color:#1e1e1e;line-height:12.0px;right:55.39999999999998px;'>6,8</div>
<div class='t' style='top:738.34px;font-size:10px;font-weight:normal;color:#1e1e1e;line-height:12.0px;right:-35.59999999999991px;'>1.137.520</div>
<div class='r' style='left:125px;top:151px;width:8px;height:602px;background:linear-gradient(to right, rgba(0,0,0,0.13), rgba(0,0,0,0.04) 40%, rgba(0,0,0,0))'></div>
</body></html>
